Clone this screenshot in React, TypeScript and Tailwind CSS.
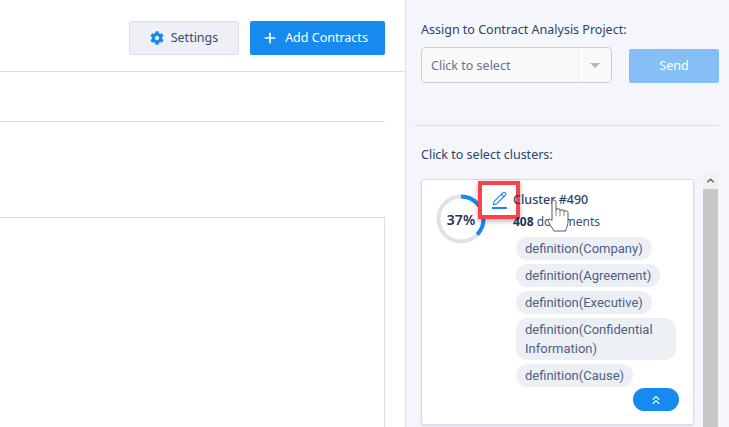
import { ChevronUp, ChevronsUp, Pencil, Plus } from "lucide-react";
import { FaCog } from "react-icons/fa";

const tags = [
  "definition(Company)",
  "definition(Agreement)",
  "definition(Executive)",
  "definition(Confidential Information)",
  "definition(Cause)",
];

function HandCursor() {
  return (
    <svg width="24" height="34" viewBox="0 0 24 34" className="absolute left-[125px] top-[19px] z-20">
      <path
        d="M5 3c0-2.500 4-2.500 4 0v8c0-1.800 4-1.800 4 0v1c0-1.700 4-1.700 4 0v1c0-1.600 4-1.600 4 .4V22c0 3.500-1 6-2.500 10H7c-1-2.500-3.500-5-5.500-9-1.200-2.500 1.500-4 3.500-1.500V3z"
        fill="#ffffff"
        stroke="#4a4a4a"
        strokeWidth="0.9"
        strokeLinejoin="round"
      />
      <path d="M9 11v6M13 12v5M17 13v4" stroke="#6a6a6a" strokeWidth="0.8" fill="none" />
    </svg>
  );
}

function ClusterCard() {
  return (
    <div className="relative h-[246px] w-[273px] shrink-0 rounded-[3px] border border-[#d9dce6] bg-white shadow-[0_1px_2px_rgba(0,0,0,0.12)]">
      <div className="absolute left-[14px] top-[14px] flex h-[50px] w-[50px] items-center justify-center">
        <svg width="50" height="50" viewBox="0 0 50 50" className="absolute inset-0 -rotate-90">
          <circle cx="25" cy="25" r="22.500" fill="none" stroke="#e2e2e2" strokeWidth="4" />
          <circle
            cx="25"
            cy="25"
            r="22.500"
            fill="none"
            stroke="#178af0"
            strokeWidth="4"
            strokeDasharray="52.300 141.400"
          />
        </svg>
        <span className="text-[14px] font-semibold text-[#1f3157]">37%</span>
      </div>

      <div className="ml-[91px] pt-[11px] pr-[17px]">
        <div className="relative z-10 text-[12.500px] leading-[18px] font-medium text-[#2d3f63]">Cluster #490</div>
        <div className="relative z-10 mt-[4px] text-[12px] leading-[18px] text-[#3b4c70]">
          <span className="font-bold text-[#1f3157]">408</span> documents
        </div>
        <div className="mt-[6px] ml-[3px] flex flex-col items-start gap-[4px]">
          {tags.map((tag) => (
            <span
              key={tag}
              className="rounded-[12px] bg-[#ecf0f5] px-[9px] py-[2px] font-['Roboto',sans-serif] text-[13px] leading-[19px] text-[#4d6085]"
            >
              {tag}
            </span>
          ))}
        </div>
      </div>

      <button className="absolute left-[211px] top-[208px] flex h-[23px] w-[46px] items-center justify-center rounded-[12px] bg-[#178af0] text-white">
        <ChevronsUp size={14} strokeWidth={2} />
      </button>

      {/* highlight drawn over the card */}
      <div className="absolute left-[56px] top-[1px] flex h-[38px] w-[42px] items-center justify-center border-[4px] border-[#f9424a] bg-white shadow-[0_2px_5px_rgba(0,0,0,0.3)]">
        <div className="flex flex-col items-center">
          <Pencil size={15} strokeWidth={1.750} className="text-[#178af0]" />
          <div className="mt-[1px] h-[1.500px] w-[15px] bg-[#178af0]" />
        </div>
      </div>

      <HandCursor />
    </div>
  );
}

export default function App() {
  return (
    <div className="flex h-[427px] w-[729px] overflow-hidden bg-white font-['Noto_Sans',sans-serif]">
      <main className="h-full w-[405px] shrink-0 bg-white">
        <div className="flex h-[72px] items-start justify-end gap-[11px] border-b border-[#dcdde6] pt-[21px] pr-[20px]">
          <button className="flex h-[34px] w-[110px] items-center justify-center gap-[7px] rounded-[2px] border border-[#d9dde6] bg-[#eef0f5] text-[12.500px] text-[#3b4c70]">
            <FaCog size={14} className="text-[#178af0]" />
            Settings
          </button>
          <button className="flex h-[34px] w-[135px] items-center justify-center gap-[7px] rounded-[2px] bg-[#178af0] pr-[5px] text-[12.500px] text-white">
            <Plus size={16} strokeWidth={2.500} />
            Add Contracts
          </button>
        </div>
        <div className="mr-[20px] h-[50px] border-b border-[#dcdde6]" />
        <div className="mt-[95px] mr-[20px] h-[300px] border-t border-r border-[#dcdde6]" />
      </main>

      <aside className="h-full flex-1 border-l border-[#dcdfe9] bg-[#f4f6fb] pl-[8px]">
        <div className="pl-[7px] pt-[20px] text-[12.500px] leading-[20px] text-[#2d4468]">
          Assign to Contract Analysis Project:
        </div>
        <div className="mt-[7px] flex items-start pl-[7px]">
          <div className="flex h-[36px] w-[191px] items-center rounded-[4px] border border-[#cfcfcf] bg-[#f9f9f9]">
            <span className="flex-1 pt-[2px] pl-[9px] text-[12.500px] text-[#6b7486]">Click to select</span>
            <span className="flex h-full w-[33px] items-center justify-center border-l border-[#eeeeee]">
              <span className="h-0 w-0 border-x-[5px] border-t-[5px] border-x-transparent border-t-[#b3b6bd]" />
            </span>
          </div>
          <button className="mt-[2px] ml-[17px] h-[34px] w-[90px] rounded-[2px] bg-[#85bff5] text-[12.500px] text-white">
            Send
          </button>
        </div>
        <div className="mt-[42px] mr-[10px] border-t border-[#dcdfe5]" />
        <div className="mt-[19px] pl-[7px] text-[12.500px] leading-[20px] text-[#2d4468]">Click to select clusters:</div>
        <div className="mt-[14px] flex items-start pl-[7px]">
          <ClusterCard />
          <div className="-mt-[7px] ml-[9px] w-[15px]">
            <div className="flex h-[17px] items-center justify-center bg-[#f1f1f1] text-[#505050]">
              <ChevronUp size={11} strokeWidth={3} />
            </div>
            <div className="h-[240px] bg-[#c8c8c8]" />
          </div>
        </div>
      </aside>
    </div>
  );
}
